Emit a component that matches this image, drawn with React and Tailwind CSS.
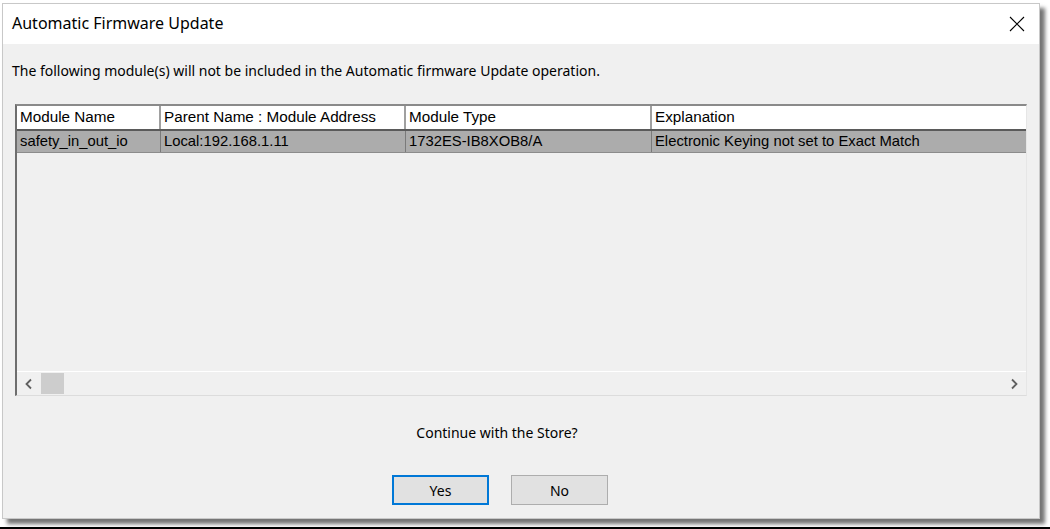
import React from 'react';

const cols = [
    { w: 'w-[144px]', head: 'Module Name', cell: 'safety_in_out_io' },
    { w: 'w-[245px]', head: 'Parent Name : Module Address', cell: 'Local:192.168.1.11' },
    { w: 'w-[246px]', head: 'Module Type', cell: '1732ES-IB8XOB8/A' },
    { w: 'flex-1', head: 'Explanation', cell: 'Electronic Keying not set to Exact Match' },
];

export default function App() {
    return (
        <div className="w-[1050px] h-[529px] bg-white flex flex-col overflow-hidden">
            <div className="flex-1 pt-[3px] pl-[2px]">
                <div className="w-[1038px] h-[516px] flex flex-col bg-[#f0f0f0] border border-[#c8c8c8] shadow-[5px_5px_4px_rgba(0,0,0,0.55)]">
                    {/* title bar */}
                    <div className="h-[40px] bg-white flex items-center justify-between pl-[9px] pr-[14px] shrink-0">
                        <span className="text-[16px] -mt-[2px] text-black font-['Noto_Sans',sans-serif]">Automatic Firmware Update</span>
                        <svg width="16" height="16" viewBox="0 0 16 16" className="text-black">
                            <path d="M1 1 L15 15 M15 1 L1 15" stroke="currentColor" strokeWidth="1.1" fill="none" />
                        </svg>
                    </div>

                    <div className="flex-1 flex flex-col px-[12px] font-['Noto_Sans',sans-serif]">
                        <p className="mt-[16px] -ml-[3px] text-[14px] text-black">
                            The following module(s) will not be included in the Automatic firmware Update operation.
                        </p>

                        {/* grid */}
                        <div className="mt-[23px] h-[292px] flex flex-col border-t-2 border-l-2 border-t-[#8a8a8a] border-l-[#6e6e6e] border-r border-b border-r-[#e6e6e6] border-b-[#dcdcdc] bg-[#f0f0f0] font-['Liberation_Sans',Arial,sans-serif]">
                            <div className="flex h-[25px] bg-white border-b-2 border-[#5a5a5a] shrink-0">
                                {cols.map((c, i) => (
                                    <div key={i} className={`${c.w} flex items-center pl-[3px] text-[15.25px] text-black border-r-2 border-[#a0a0a0] last:border-r-0`}>
                                        {c.head}
                                    </div>
                                ))}
                            </div>
                            <div className="flex h-[22px] bg-[#acacac] border-b border-[#8c8c8c] shrink-0">
                                {cols.map((c, i) => (
                                    <div key={i} className={`${c.w} flex items-center pl-[3px] text-[14.8px] text-black border-r border-[#7a7a7a] last:border-r-0`}>
                                        {c.cell}
                                    </div>
                                ))}
                            </div>
                            <div className="flex-1" />
                            {/* horizontal scrollbar */}
                            <div className="h-[24px] flex items-center border-t border-white shrink-0">
                                <div className="w-[24px] flex justify-center">
                                    <svg width="10" height="12" viewBox="0 0 10 12">
                                        <path d="M7 1.5 L2.5 6 L7 10.5" stroke="#606060" strokeWidth="1.8" fill="none" />
                                    </svg>
                                </div>
                                <div className="w-[23px] h-[21px] bg-[#cdcdcd]" />
                                <div className="flex-1" />
                                <div className="w-[24px] flex justify-center">
                                    <svg width="10" height="12" viewBox="0 0 10 12">
                                        <path d="M3 1.5 L7.5 6 L3 10.5" stroke="#606060" strokeWidth="1.8" fill="none" />
                                    </svg>
                                </div>
                            </div>
                        </div>

                        <div className="flex flex-col items-center pr-[42px]">
                            <p className="mt-[26px] ml-[-6px] text-[14px] text-black">Continue with the Store?</p>
                            <div className="mt-[32px] flex gap-[22px]">
                                <button className="w-[97px] h-[30px] bg-[#e1e1e1] border-2 border-[#0078d7] text-[14px] text-black">Yes</button>
                                <button className="w-[97px] h-[30px] bg-[#e1e1e1] border border-[#adadad] text-[14px] text-black">No</button>
                            </div>
                        </div>
                    </div>
                </div>
            </div>
            <div className="h-[2px] bg-black shrink-0" />
        </div>
    );
}
